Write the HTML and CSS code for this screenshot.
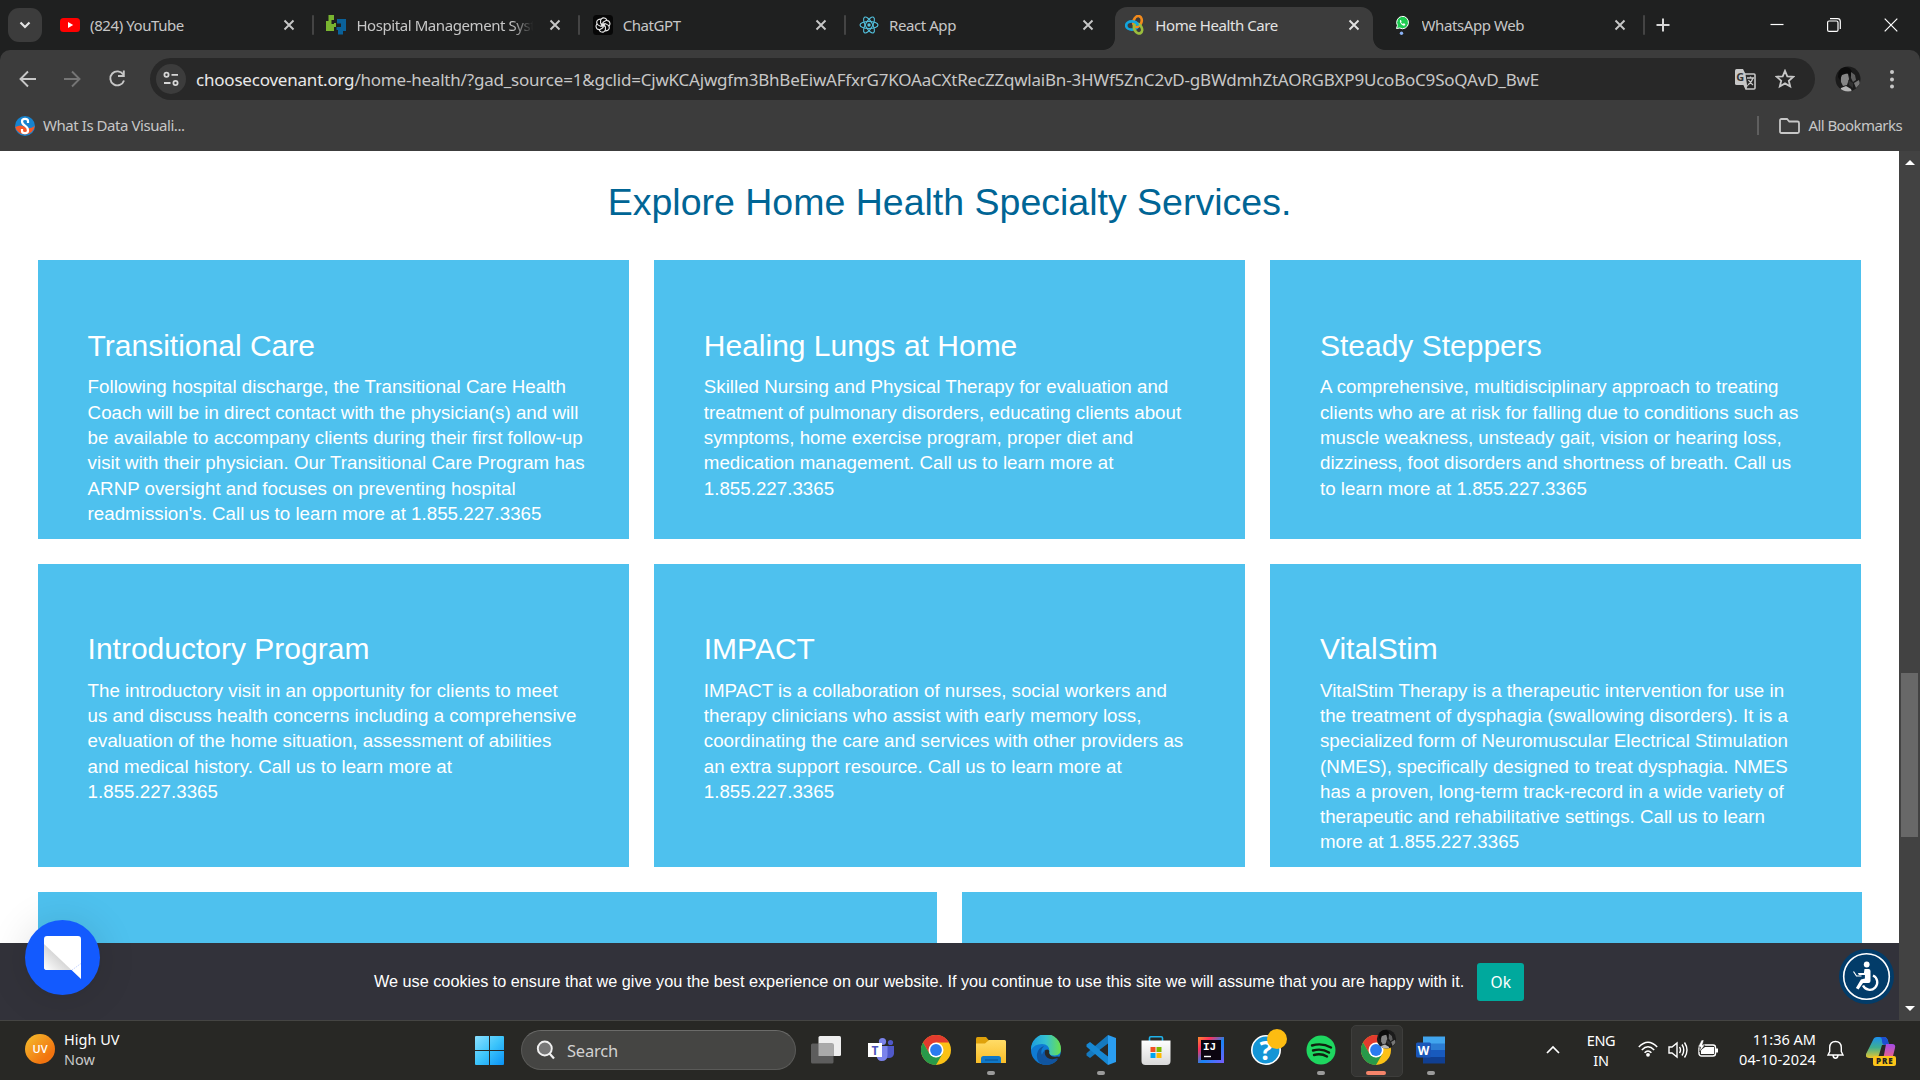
FILE: index.html
```html
<!DOCTYPE html>
<html lang="en">
<head>
<meta charset="utf-8">
<title>Home Health Care</title>
<link rel="stylesheet" href="styles.css">
</head>
<body>
<svg class="defs" width="0" height="0" aria-hidden="true">
  <defs>
    <linearGradient id="gWin" x1="0" y1="0" x2="1" y2="1"><stop offset="0" stop-color="#8be0ff"/><stop offset=".5" stop-color="#3cc4fb"/><stop offset="1" stop-color="#0a92f5"/></linearGradient>
    <linearGradient id="gUv" x1="0" y1="0" x2="1" y2="1"><stop offset="0" stop-color="#f4c02f"/><stop offset=".75" stop-color="#f2740f"/></linearGradient>
    <linearGradient id="gFolder" x1="0" y1="0" x2="0" y2="1"><stop offset="0" stop-color="#ffdc67"/><stop offset="1" stop-color="#f9bd27"/></linearGradient>
    <linearGradient id="gEdge" x1="0" y1="0" x2="1" y2="0"><stop offset="0" stop-color="#1b9de2"/><stop offset=".5" stop-color="#35c1d0"/><stop offset="1" stop-color="#6ae04c"/></linearGradient>
    <linearGradient id="gBag" x1="0" y1="0" x2="0" y2="1"><stop offset="0" stop-color="#fff"/><stop offset="1" stop-color="#d9d9d9"/></linearGradient>
    <linearGradient id="gIj" x1="0" y1="0" x2="1" y2="1"><stop offset="0" stop-color="#fe8a2c"/><stop offset=".25" stop-color="#fe315d"/><stop offset=".55" stop-color="#1685f5"/><stop offset="1" stop-color="#7a5cff"/></linearGradient>
    <linearGradient id="gFold" x1="0" y1="1" x2=".6" y2=".4"><stop offset="0" stop-color="#fff"/><stop offset="1" stop-color="#cfcfcf"/></linearGradient>
    <linearGradient id="gCopA" x1="0" y1="0" x2="0" y2="1"><stop offset="0" stop-color="#1c8ff0"/><stop offset=".5" stop-color="#3fae90"/><stop offset="1" stop-color="#e9c62d"/></linearGradient>
    <linearGradient id="gCopB" x1="0" y1="0" x2="0" y2="1"><stop offset="0" stop-color="#a34be8"/><stop offset="1" stop-color="#f2657c"/></linearGradient>
    <clipPath id="roundClip"><circle cx="13" cy="13" r="12.5"/></clipPath>
    <symbol id="portrait" viewBox="0 0 26 26">
      <g clip-path="url(#roundClip)">
        <rect width="26" height="26" fill="#1b1b1b"/>
        <path d="M6 9q4-3 7-1l1 5-2 6-4 1-2-4z" fill="#858585"/>
        <path d="M3 11Q3 2 10 1q7 0 7 7l-2 3-2-4-6 2-2 5z" fill="#0c0c0c"/>
        <path d="M16 6l4 3 1 5-3 2-2-4z" fill="#5f5f5f"/>
        <path d="M19 17l5-3 1 4-4 4z" fill="#777"/>
        <path d="M6 22l5-2 5 3 1 3H5z" fill="#b5b5b5"/>
        <path d="M13 14l5 3v5l-4-3z" fill="#303030"/>
      </g>
    </symbol>
    <symbol id="chrome" viewBox="0 0 30 30">
      <circle cx="15" cy="15" r="15" fill="#fbc116"/>
      <path d="M15 7.500H28A15 15 0 0 0 2 7.500L8.500 18.700z" fill="#e33b2e"/>
      <path d="M2 7.500L8.500 18.700 15 22.500 21.500 18.700 15 30A15 15 0 0 1 2 7.500z" fill="#28994a"/>
      <circle cx="15" cy="15" r="7.500" fill="#fff"/><circle cx="15" cy="15" r="5.900" fill="#2b7bee"/>
    </symbol>
    <symbol id="x" viewBox="0 0 12 12"><path d="M1.500 1.500l9 9M10.500 1.500l-9 9" stroke="currentColor" stroke-width="1.900" fill="none"/></symbol>
  </defs>
</svg>

<div class="screen">
  <header class="tabstrip">
    <div class="tabsearch"><svg width="12" height="8" viewBox="0 0 12 8"><path d="M1.500 1.500L6 6l4.500-4.500" fill="none" stroke="#e3e3e3" stroke-width="2.200"/></svg></div>
    <div class="tabs">
      <div class="tab">
        <svg class="fav" viewBox="0 0 20 20"><rect y="3" width="20" height="14" rx="3.500" fill="#f00"/><path d="M8 7l5.200 3L8 13z" fill="#fff"/></svg>
        <span class="label">(824) YouTube</span><svg class="x"><use href="#x"/></svg>
      </div>
      <div class="tab">
        <svg class="fav" viewBox="0 0 20 20"><path d="M2.500 0H8v5H5.500v4H8V8h2v4H8v4H0V6h2.500z" fill="#79b530"/><path d="M11 4h9v12h-3v3.500h-5V15h-1.500v-3H15V8.500h-4z" fill="#0a6199"/></svg>
        <span class="label fade">Hospital Management System</span><svg class="x"><use href="#x"/></svg>
      </div>
      <div class="tab">
        <svg class="fav" viewBox="0 0 20 20"><rect width="20" height="20" rx="3.500" fill="#070707"/><g fill="none" stroke="#e8e8e8" stroke-width="1.100"><path id="petal" d="M10 7.200L13 5.500Q16.500 5 17 8.500 17 10 16 11.200M10 7.200v5.300"/><use href="#petal" transform="rotate(60 10 10)"/><use href="#petal" transform="rotate(120 10 10)"/><use href="#petal" transform="rotate(180 10 10)"/><use href="#petal" transform="rotate(240 10 10)"/><use href="#petal" transform="rotate(300 10 10)"/></g></svg>
        <span class="label">ChatGPT</span><svg class="x"><use href="#x"/></svg>
      </div>
      <div class="tab nosep">
        <svg class="fav" viewBox="0 0 20 20"><g fill="none" stroke="#53c1de" stroke-width="1.100"><ellipse cx="10" cy="10" rx="9" ry="3.500"/><ellipse cx="10" cy="10" rx="9" ry="3.500" transform="rotate(60 10 10)"/><ellipse cx="10" cy="10" rx="9" ry="3.500" transform="rotate(120 10 10)"/></g><circle cx="10" cy="10" r="1.700" fill="#53c1de"/></svg>
        <span class="label">React App</span><svg class="x"><use href="#x"/></svg>
      </div>
      <div class="tab active">
        <svg class="fav" viewBox="0 0 20 20"><g fill="none" stroke-width="2.700"><ellipse cx="7" cy="10.500" rx="5.800" ry="4.200" stroke="#12a5dd"/><ellipse cx="12.500" cy="6.500" rx="4" ry="5.600" stroke="#f28a1c" transform="rotate(20 12.500 6.500)"/><ellipse cx="13" cy="13.500" rx="3.700" ry="5.200" stroke="#9bbd3c" transform="rotate(-30 13 13.500)"/><path d="M7 6.300q5 .2 5.800 4.200" stroke="#12a5dd"/></g></svg>
        <span class="label">Home Health Care</span><svg class="x"><use href="#x"/></svg>
      </div>
      <div class="tab">
        <svg class="fav" viewBox="0 0 20 20"><path d="M4.500 13.500l.9-3A5.900 6.200 0 1 1 7.800 13z" fill="#1dcb51" stroke="#fff" stroke-width="1"/><path d="M8 5.300q-1 2 1.500 4.200 2 1.800 3.500.8l.3-1.200-1.600-.8-.8.8q-1.300-.5-1.900-1.800l.6-.8-.7-1.400z" fill="#fff"/><circle cx="9.500" cy="18.300" r="1.700" fill="#8ab1f5"/></svg>
        <span class="label">WhatsApp Web</span><svg class="x"><use href="#x"/></svg>
      </div>
    </div>
    <svg class="newtab" width="14" height="14" viewBox="0 0 14 14"><path d="M7 .5v13M.5 7h13" stroke="#d6d6d6" stroke-width="2"/></svg>
    <div class="winctl">
      <svg width="14" height="14" viewBox="0 0 14 14"><path d="M.5 6.500h13" stroke="#fff" stroke-width="1.200"/></svg>
      <svg width="14" height="14" viewBox="0 0 14 14"><g fill="none" stroke="#fff" stroke-width="1.200"><rect x=".6" y="3" width="10.400" height="10.400" rx="1.500"/><path d="M3 .7h7.500q2.800 0 2.800 2.800V11"/></g></svg>
      <svg width="14" height="14" viewBox="0 0 14 14"><path d="M.7.700l12.600 12.600M13.300.700L.7 13.300" stroke="#fff" stroke-width="1.200"/></svg>
    </div>
  </header>

  <div class="toolbar">
    <svg class="nav" width="20" height="20" viewBox="0 0 20 20"><path d="M18 10H3M10 2.500L2.500 10l7.500 7.500" fill="none" stroke="#c7c7c7" stroke-width="1.900"/></svg>
    <svg class="nav" width="20" height="20" viewBox="0 0 20 20"><path d="M1 10h15M9 2.500l7.500 7.500L9 17.500" fill="none" stroke="#757575" stroke-width="1.900"/></svg>
    <svg class="nav" width="20" height="20" viewBox="0 0 20 20"><path d="M15.200 5.500A7 7 0 1 0 16 11.500M15.800 1.500V7H10" fill="none" stroke="#c7c7c7" stroke-width="1.900"/></svg>
    <div class="omnibox">
      <div class="site"><svg width="18" height="18" viewBox="0 0 18 18"><g fill="none" stroke="#d6d6d6" stroke-width="1.800"><circle cx="4.500" cy="4.800" r="2.100"/><path d="M9.500 4.800h6.500M2 13h6.500"/><circle cx="13.500" cy="13" r="2.100"/></g></svg></div>
      <span class="url"><b>choosecovenant.org</b>/home-health/?gad_source=1&amp;gclid=CjwKCAjwgfm3BhBeEiwAFfxrG7KOAaCXtRecZZqwlaiBn-3HWf5ZnC2vD-gBWdmhZtAORGBXP9UcoBoC9SoQAvD_BwE</span>
      <svg class="translate" width="21" height="21" viewBox="0 0 21 21"><path d="M9 5h10q1 0 1 1v13q0 1-1 1H11L9 15" fill="none" stroke="#c7c7c7" stroke-width="1.600"/><path d="M1.500 0H8l2.500 5L12 16H1.500Q0 16 0 14.500v-13Q0 0 1.500 0z" fill="#c7c7c7"/><path d="M8.500 16h4.500l-2 4.500z" fill="#c7c7c7"/><path d="M12 9h7M15.500 7.500V9M18 9q-1 4-5 7M13.500 11q2 3 4.500 5" fill="none" stroke="#c7c7c7" stroke-width="1.300"/><text x="1.300" y="12.300" class="g">G</text></svg>
      <svg class="star" width="20" height="20" viewBox="0 0 20 20"><path d="M10 1.800l2.300 5.500 6 .5-4.500 3.900 1.400 5.800L10 14.400l-5.200 3.100 1.400-5.800L1.700 7.800l6-.5z" fill="none" stroke="#c7c7c7" stroke-width="1.800"/></svg>
    </div>
    <svg class="avatar" width="26" height="26"><use href="#portrait"/></svg>
    <svg class="dots" width="4" height="20" viewBox="0 0 4 20"><g fill="#c7c7c7"><circle cx="2" cy="2" r="2"/><circle cx="2" cy="9.500" r="2"/><circle cx="2" cy="16.500" r="2"/></g></svg>
  </div>

  <div class="bookmarks">
    <svg width="20" height="20" viewBox="0 0 20 20"><circle cx="10" cy="10" r="10" fill="#1683cf"/><path d="M.2 11Q6 8 10 11t9.800-1A10 10 0 0 1 .2 11z" fill="#f2592a"/><path d="M13 7V5Q13 2.800 10 2.800T7 5.200Q7 7.800 10 9.600T13 14.500Q13 17.200 10 17.200T7 15V13" fill="none" stroke="#fff" stroke-width="2.200"/></svg>
    <span class="bm">What Is Data Visuali...</span>
    <i class="bmsep"></i>
    <svg width="22" height="16" viewBox="0 0 22 16"><path d="M1 13.500v-11Q1 1 2.500 1H8l2.300 2.500h8.200Q20 3.500 20 5v8.500q0 1.500-1.500 1.500h-16Q1 15 1 13.500z" fill="none" stroke="#c7c7c7" stroke-width="1.800"/></svg>
    <span class="bm all">All Bookmarks</span>
  </div>

  <div class="viewport">
    <main class="page">
      <h1>Explore Home Health Specialty Services.</h1>
      <div class="grid">
        <section class="card"><h2>Transitional Care</h2><p>Following hospital discharge, the Transitional Care Health<br>Coach will be in direct contact with the physician(s) and will<br>be available to accompany clients during their first follow-up<br>visit with their physician. Our Transitional Care Program has<br>ARNP oversight and focuses on preventing hospital<br>readmission's. Call us to learn more at 1.855.227.3365</p></section>
        <section class="card"><h2>Healing Lungs at Home</h2><p>Skilled Nursing and Physical Therapy for evaluation and<br>treatment of pulmonary disorders, educating clients about<br>symptoms, home exercise program, proper diet and<br>medication management. Call us to learn more at<br>1.855.227.3365</p></section>
        <section class="card"><h2>Steady Steppers</h2><p>A comprehensive, multidisciplinary approach to treating<br>clients who are at risk for falling due to conditions such as<br>muscle weakness, unsteady gait, vision or hearing loss,<br>dizziness, foot disorders and shortness of breath. Call us<br>to learn more at 1.855.227.3365</p></section>
        <section class="card low"><h2>Introductory Program</h2><p>The introductory visit in an opportunity for clients to meet<br>us and discuss health concerns including a comprehensive<br>evaluation of the home situation, assessment of abilities<br>and medical history. Call us to learn more at<br>1.855.227.3365</p></section>
        <section class="card low"><h2>IMPACT</h2><p>IMPACT is a collaboration of nurses, social workers and<br>therapy clinicians who assist with early memory loss,<br>coordinating the care and services with other providers as<br>an extra support resource. Call us to learn more at<br>1.855.227.3365</p></section>
        <section class="card low"><h2>VitalStim</h2><p>VitalStim Therapy is a therapeutic intervention for use in<br>the treatment of dysphagia (swallowing disorders). It is a<br>specialized form of Neuromuscular Electrical Stimulation<br>(NMES), specifically designed to treat dysphagia. NMES<br>has a proven, long-term track-record in a wide variety of<br>therapeutic and rehabilitative settings. Call us to learn<br>more at 1.855.227.3365</p></section>
      </div>
      <div class="grid two"><section class="card"></section><section class="card"></section></div>
      <div class="cookie"><span>We use cookies to ensure that we give you the best experience on our website. If you continue to use this site we will assume that you are happy with it.</span><button class="ok">Ok</button></div>
      <div class="chat"><svg width="38" height="44" viewBox="0 0 38 44"><path d="M3 0h31q3 0 3 3v40L27.500 34H3q-3 0-3-3V3q0-3 3-3z" fill="#fff"/><path d="M0 8l27.500 26H3q-3 0-3-3z" fill="url(#gFold)"/><path d="M28 34l9-6.500" stroke="#b6c8ff" stroke-width=".8" stroke-dasharray="1.500 1"/></svg></div>
      <div class="access"><svg width="55" height="55" viewBox="0 0 55 55"><circle cx="27.500" cy="27.500" r="27.500" fill="#023c69"/><circle cx="27.500" cy="27.500" r="22.800" fill="none" stroke="#fff" stroke-width="1.600"/><circle cx="27.700" cy="15.500" r="2.900" fill="#fff"/><path d="M25.500 20h4q2 0 2 2v10q0 2-2 2h-5.500l-4.500 6.500-2.600-1.500 5-8.500 4-1V26h-6l-1-2h6z" fill="#fff"/><path d="M14.500 22.500l3 4.500h5" fill="none" stroke="#fff" stroke-width="1.200"/><path d="M34 26.500a7.500 7.500 0 1 1-10 10" fill="none" stroke="#fff" stroke-width="2.300"/></svg></div>
    </main>
    <div class="scroll"><i class="up"></i><i class="thumb"></i><i class="down"></i></div>
  </div>

  <footer class="taskbar">
    <div class="weather"><svg width="30" height="30" viewBox="0 0 30 30"><circle cx="15" cy="15" r="15" fill="url(#gUv)"/><text x="15" y="19" class="uv">UV</text></svg><div class="wt">High UV<br><span class="dim">Now</span></div></div>
    <div class="apps">
      <svg class="start" width="29" height="29" viewBox="0 0 29 29"><path d="M0 1q0-1 1-1h13v14H0zM15 0h13q1 0 1 1v13H15zM0 15h14v14H1q-1 0-1-1zM15 15h14v13q0 1-1 1H15z" fill="url(#gWin)"/></svg>
      <div class="search"><svg width="20" height="20" viewBox="0 0 20 20"><circle cx="8.800" cy="8.500" r="7" fill="#777" stroke="#f0f0f0" stroke-width="1.900"/><path d="M13.500 13.500l4.500 5" stroke="#f0f0f0" stroke-width="2.200"/></svg><span>Search</span></div>
      <div class="app"><svg viewBox="0 0 30 30"><rect x="7.500" y="1" width="22.500" height="20" rx="1.500" fill="#eee"/><rect y="8.500" width="22.500" height="20" rx="1.500" fill="#5d5d5d"/><path d="M7.500 8.500h15V21h-15z" fill="#aaa"/></svg></div>
      <div class="app"><svg viewBox="0 0 30 30"><circle cx="16.500" cy="6.500" r="3.600" fill="#7b83eb"/><circle cx="24.500" cy="7.500" r="2.600" fill="#5059c9"/><path d="M20 11h8v8q-1 4-5 4h-3z" fill="#5059c9"/><path d="M10.500 11h11v9q0 6-6 6-4 0-5-5z" fill="#7b83eb"/><rect x="2" y="8" width="14" height="14" fill="#fff"/><text x="9" y="19.500" class="teams">T</text></svg></div>
      <div class="app"><svg><use href="#chrome"/></svg></div>
      <div class="app run"><svg viewBox="0 0 30 30"><path d="M0 3.500Q0 2 1.500 2H10l3 3.500V12H0z" fill="#dfa10a"/><path d="M0 8.500h9L13 5h15.500Q30 5 30 6.500V28H0z" fill="url(#gFolder)"/><path d="M5 28v-4.500Q5 21 7.500 21h15q2.500 0 2.500 2.500V28z" fill="#0f78c8"/><path d="M9 25h13" stroke="#0a4f8c"/></svg></div>
      <div class="app"><svg viewBox="0 0 30 30"><circle cx="15" cy="15" r="15" fill="#0f7bd3"/><path d="M0 14A15 15 0 0 1 30 14q0 6-6.500 6.500-6 0-5-3Q19 9 11 9 3 9 0 15z" fill="url(#gEdge)"/><path d="M13 11q-5 5-1 11 5 6 15.500 1-5 8-14.500 7Q5 28 6 19q1-6 7-8z" fill="#10559f"/><path d="M18 18q2.500 5 8 3.500l5 .5-3 2q-8 3-13-1-3.500-4-1-8 5-2 4 3z" fill="#292928"/><path d="M14.500 15q-2 4 1.500 7.500 4 3 11 .5-5 7-14 3-5-7 1.500-11z" fill="#1254a0"/></svg></div>
      <div class="app run"><svg viewBox="0 0 30 30"><path d="M22 0v9L4 23 .5 20.500v-2.300L22 0z" fill="#1579bf"/><path d="M22 30v-9L4 7 .5 9.500v2.300L22 30z" fill="#1788d4"/><path d="M22 0l8 3v24l-8 3z" fill="#2a9df0"/><path d="M22 8.500v13L13.500 15z" fill="#292928"/></svg></div>
      <div class="app"><svg viewBox="0 0 30 30"><path d="M8.500 6V3q0-1.300 1.300-1.300h10.400q1.300 0 1.300 1.300v3" fill="none" stroke="#1fb2ea" stroke-width="1.600"/><path d="M.5 5.500h29V26q0 4-4 4h-21q-4 0-4-4z" fill="url(#gBag)"/><path d="M9.500 12h5v5h-5z" fill="#f25022"/><path d="M15.500 12h5v5h-5z" fill="#7fba00"/><path d="M9.500 18h5v5h-5z" fill="#00a4ef"/><path d="M15.500 18h5v5h-5z" fill="#ffb900"/></svg></div>
      <div class="app"><svg viewBox="0 0 30 30"><path d="M2 2h26v26H2z" fill="url(#gIj)"/><path d="M5 5h20v20H5z" fill="#0b0510"/><path d="M8 21.500h7" stroke="#fff" stroke-width="1.400"/><text x="7" y="15" class="ij">IJ</text></svg></div>
      <div class="app"><svg viewBox="0 0 30 30" overflow="visible"><circle cx="15" cy="15" r="14.200" fill="#1495d6" stroke="#fff" stroke-width="1.600"/><text x="15" y="25" class="help">?</text><circle cx="26" cy="4" r="10" fill="#fdbc11"/></svg></div>
      <div class="app run"><svg viewBox="0 0 30 30"><circle cx="15" cy="15" r="14.500" fill="#1ed760"/><path d="M6 10.500q10-3 19 2M7 15.500q9-2.500 16 2M8 20q7-2 13 1.500" fill="none" stroke="#10200f" stroke-width="2.400" stroke-linecap="round"/></svg></div>
      <div class="app run on"><svg overflow="visible" viewBox="0 0 30 30"><use href="#chrome" width="30" height="30"/><use href="#portrait" x="15.500" y="-6" width="20" height="20"/></svg></div>
      <div class="app run"><svg viewBox="0 0 30 30"><path d="M7 1.500h22V9H7z" fill="#41a5ee"/><path d="M7 8.500h22V15H7z" fill="#2b7cd3"/><path d="M7 15h22v7H7z" fill="#185abd"/><path d="M7 22h22v6.500H7z" fill="#103f91"/><rect y="7.500" width="15" height="15" rx="1.500" fill="#1a56b8"/><text x="7.500" y="19.500" class="word">W</text></svg></div>
    </div>
    <div class="tray">
      <svg class="caret" width="14" height="9" viewBox="0 0 14 9"><path d="M1 8l6-6 6 6" fill="none" stroke="#fff" stroke-width="1.700"/></svg>
      <div class="lang">ENG<br>IN</div>
      <svg class="wifi" width="20" height="16" viewBox="0 0 20 16"><g fill="none" stroke="#fff" stroke-width="1.500"><path d="M.8 6Q10-3.500 19.200 6M3.800 9Q10 2.500 16.200 9M6.600 11.800Q10 8 13.400 11.800"/></g><circle cx="10" cy="13.800" r="1.900" fill="#fff"/></svg>
      <svg class="vol" width="20" height="18" viewBox="0 0 20 18"><g fill="none" stroke="#fff" stroke-width="1.400"><path d="M1 6h3l5-4v14l-5-4H1z"/><path d="M11.500 6q2 3 0 6M14 3.500q3.500 5.500 0 11M16.500 1.500q5 7.500 0 15"/></g></svg>
      <svg class="bat" width="20" height="18" viewBox="0 0 20 18"><rect x="1" y="5" width="16.500" height="11" rx="2.500" fill="none" stroke="#fff" stroke-width="1.400"/><path d="M7 7h9v7H3v-4z" fill="#fff"/><path d="M18 8.500h2v4h-2z" fill="#fff"/><path d="M3.500 0L0 7h2.500l-1 5L7 5H4.500L6 0z" fill="#fff" stroke="#262624" stroke-width=".6"/></svg>
      <div class="clock">11:36 AM<br><span class="date">04-10-2024</span></div>
      <svg class="bell" width="17" height="20" viewBox="0 0 17 20"><path d="M1 15h15l-1.700-3.500V7.500Q14 1.500 8.500 1.500T2.700 7.500v4zM6 15.500q.5 2.700 2.500 2.700t2.500-2.700" fill="none" stroke="#fff" stroke-width="1.400"/></svg>
      <svg class="cop" width="30" height="30" viewBox="0 0 30 30"><path d="M7 3q1-3 4-3h7q3 0 4 4l1 4h-5l-2 0-3 10q-1 3-4 3H3q-4 0-3-4z" fill="url(#gCopA)"/><path d="M13 0h5q3 0 4 4l1 4h-4q-3 0-3-4t-3-4z" fill="#1d4fd0"/><path d="M20 7h6q4 0 3 4l-2 8q-1 3-4 3h-9q3 0 4-4z" fill="url(#gCopB)"/><rect x="7" y="19" width="23" height="10" rx="2" fill="#fcc419"/><text x="18.700" y="27" class="pre">PRE</text></svg>
    </div>
  </footer>
</div>
</body>
</html>
```
FILE: styles.css
```css
* { box-sizing: border-box; }
body { margin: 0; background: #1f2020; font-family: "Noto Sans", "Open Sans", sans-serif; }
svg { display: block; flex: none; }
.defs { position: absolute; }
.screen { width: 1920px; height: 1080px; overflow: hidden; display: flex; flex-direction: column; background: #1f2020; }

.tabstrip { height: 50px; display: flex; align-items: flex-start; color: #c7c7c7; }
.tabsearch { width: 34px; height: 34px; margin: 8px 4.600px 0 8px; border-radius: 11px; background: #3c3c3c; display: flex; align-items: center; justify-content: center; }
.tabs { display: flex; }
.tab { width: 266.300px; height: 50px; padding: 0 18px 0 13.500px; display: flex; align-items: center; font-size: 15px; letter-spacing: -.42px; position: relative; }
.tab::after { content: ""; position: absolute; right: -1px; top: 15px; width: 2px; height: 20px; background: #444; border-radius: 1px; }
.tab.nosep::after { display: none; }
.tab > * { position: relative; }
.fav { width: 20px; height: 20px; margin-right: 10px; }
.label { flex: 1; white-space: nowrap; overflow: hidden; margin-right: 12px; }
.fade { -webkit-mask-image: linear-gradient(90deg, #000 86%, transparent 98%); mask-image: linear-gradient(90deg, #000 86%, transparent 98%); }
.x { width: 12px; height: 12px; }
.tab.active { color: #e3e3e3; }
.tab.active::before { content: ""; position: absolute; left: 3px; right: 5px; top: 7px; bottom: 0; background: #3c3c3c; border-radius: 12px 12px 0 0; }
.tab.active::after { left: -9px; right: -7px; top: auto; bottom: 0; width: auto; height: 12px; border-radius: 0; background: radial-gradient(circle at 0 0, transparent 11.5px, #3c3c3c 12.3px) left / 12px 12px no-repeat, radial-gradient(circle at 100% 0, transparent 11.5px, #3c3c3c 12.3px) right / 12px 12px no-repeat; }
.newtab { margin: 18px 0 0 12px; }
.winctl { margin: 18px 22px 0 auto; display: flex; gap: 43px; }

.toolbar { height: 57px; background: #3c3c3c; border-radius: 10px 10px 0 0; display: flex; align-items: flex-start; padding: 8px 26px 0 18px; }
.nav { margin: 11px 25px 0 0; }
.omnibox { width: 1665px; height: 42px; margin-left: -3px; border-radius: 21px; background: #282828; display: flex; align-items: center; padding: 0 20px 0 6px; }
.site { width: 30px; height: 30px; border-radius: 15px; background: #3c3c3c; display: flex; align-items: center; justify-content: center; margin-right: 10px; }
.url { font-size: 17px; letter-spacing: -.209px; color: #c7c7c7; white-space: nowrap; }
.url b { font-weight: 400; color: #e8e8e8; }
.translate { margin-left: auto; }
.star { margin-left: 19px; }
.avatar { margin: 8px 0 0 20px; }
.dots { margin: 12px 0 0 auto; }
.g { font: 700 11px "Open Sans", sans-serif; fill: #333; }

.bookmarks { height: 44px; background: #3c3c3c; display: flex; align-items: center; padding: 0 18px 7px 15px; color: #c7c7c7; font-size: 15px; letter-spacing: -.442px; }
.bm { margin-left: 8px; white-space: nowrap; position: relative; top: -0.500px; }
.bmsep { width: 2px; height: 19px; background: #5f5f5f; margin: 0 20px 0 auto; }
.all { margin-left: 8px; letter-spacing: -.575px; }

.viewport { height: 869px; display: flex; }
.page { width: 1899px; background: #fff; position: relative; overflow: hidden; font-family: "Liberation Sans", Arial, sans-serif; }
h1 { margin: 0; height: 109px; padding-top: 29px; line-height: 45px; font-size: 37.500px; font-weight: 400; color: #006595; text-align: center; }
.grid { display: grid; grid-template-columns: repeat(3, 591.200px); grid-template-rows: 279px 303px; gap: 25px; margin-left: 37.800px; }
.two { grid-template-columns: 899px 900px; grid-template-rows: 279px; margin: 25px 0 0 38px; }
.card { background: #4ec1ee; color: #fff; padding: 66px 0 0 49.800px; white-space: nowrap; }
h2 { margin: 0; font-size: 30px; line-height: 40px; font-weight: 400; }
p { margin: 8.300px 0 0; font-size: 18.750px; line-height: 25.312px; }
.low { padding-top: 65px; }
.low p { margin-top: 8.600px; }

.cookie { position: absolute; left: 0; right: 0; bottom: 0; height: 77px; background: #32323a; color: #fff; font-size: 16.250px; letter-spacing: -.01px; display: flex; align-items: center; padding-left: 374px; white-space: nowrap; }
.ok { width: 47px; height: 38px; margin: 0 0 0 13px; border: 0; border-radius: 3px; background: #00a99d; color: #fff; font: 15.500px "Noto Sans", sans-serif; padding: 0; }
.chat { position: absolute; left: 25px; top: 769px; width: 75px; height: 75px; border-radius: 50%; background: #135afe; box-shadow: 0 2px 40px rgba(0, 0, 0, .12); padding: 16px 0 0 19px; }
.access { position: absolute; left: 1839px; top: 798px; }
.scroll { width: 21px; background: #424242; display: flex; flex-direction: column; align-items: center; }
.scroll i { border: 5px solid transparent; }
.scroll .up { border-top: 0; border-bottom-color: #fff; margin-top: 9px; }
.scroll .thumb { border: 0; width: 17px; height: 164px; background: #686868; margin-top: 508px; }
.scroll .down { border-bottom: 0; border-top-color: #fff; margin: auto 0 9px; }

.taskbar { height: 60px; border-top: 1px solid #454543; background: #282825; display: flex; color: #fff; font-size: 14.500px; }
.weather { width: 449px; padding: 13px 0 0 25px; display: flex; }
.wt { margin: -5px 0 0 9px; line-height: 20px; }
.dim { color: #c9c9c9; }
.uv { font: 600 11px "Open Sans", sans-serif; fill: #fff; text-anchor: middle; }
.apps { display: flex; margin-left: -1px; }
.start { margin: 15px 17px 0 27px; }
.search { width: 275px; height: 40px; margin: 9px 2px 0 0; border: 1px solid #5a5a58; border-top-color: #6b6b69; border-radius: 20px; background: #454543; display: flex; align-items: center; padding-left: 14px; gap: 11px; font-size: 16.500px; letter-spacing: -.2px; color: #d2d2d2; }
.app { width: 55px; height: 59px; position: relative; display: flex; justify-content: center; padding-top: 14px; }
.app svg { width: 30px; height: 30px; position: relative; }
.run::after { content: ""; position: absolute; left: 23.500px; bottom: 5px; width: 8px; height: 4px; border-radius: 2px; background: #9b9b9b; }
.on::before { content: ""; position: absolute; left: 2.500px; top: 4px; width: 50px; height: 50px; border-radius: 5px; background: #343432; border: 1px solid #3e3e3c; }
.on::after { left: 17.500px; width: 20px; background: #f5846a; }
.teams { font: 700 12px "Open Sans", sans-serif; fill: #4b53bc; text-anchor: middle; }
.ij { font: 700 11px "Liberation Mono", monospace; fill: #fff; }
.help { font: 700 27px "Noto Sans", sans-serif; fill: #fff; text-anchor: middle; }
.word { font: 700 12px "Open Sans", sans-serif; fill: #fff; text-anchor: middle; }
.pre { font: 800 8px "Open Sans", sans-serif; fill: #222; text-anchor: middle; letter-spacing: .8px; }
.tray { margin-left: auto; display: flex; align-items: flex-start; line-height: 20px; padding-right: 24px; }
.caret { margin-top: 24px; }
.lang { width: 36px; margin: 9px 0 0 23px; text-align: center; letter-spacing: -.3px; }
.wifi { margin: 20px 0 0 19px; }
.vol { margin: 20px 0 0 10px; }
.bat { margin: 19px 0 0 10px; }
.clock { width: 98px; margin-top: 8px; text-align: right; white-space: nowrap; }
.date { letter-spacing: .13px; }
.bell { margin: 19px 0 0 11px; }
.cop { margin: 16px 0 0 22px; }
```
